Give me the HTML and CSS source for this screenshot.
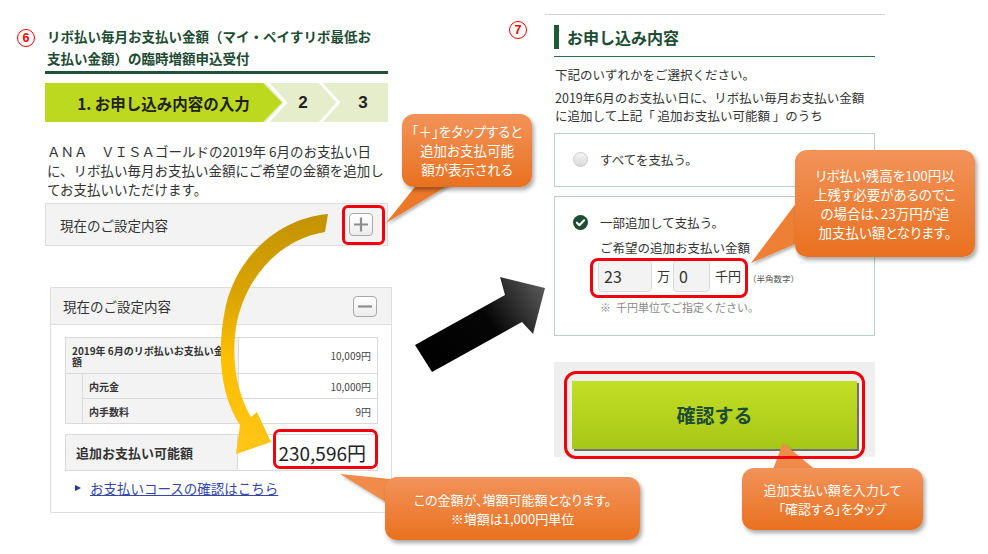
FILE: index.html
```html
<!DOCTYPE html>
<html lang="ja">
<head>
<meta charset="utf-8">
<title>リボ払い毎月お支払い金額の臨時増額申込受付</title>
<link rel="stylesheet" href="styles.css">
</head>
<body>
<div class="page">
  <section class="left">
    <h1 class="title">リボ払い毎月お支払い金額（マイ・ペイすリボ最低お<br>支払い金額）の臨時増額申込受付</h1>
    <div class="steps">
      <svg class="steps-bg" width="343" height="39" viewBox="0 0 343 39">
        <rect width="343" height="39" fill="#e5edcb"/>
        <polygon points="0,0 218,0 237,19.5 218,39 0,39" fill="#bdd91f"/>
        <polyline points="221,-2 240.5,19.5 221,41" fill="none" stroke="#fff" stroke-width="3"/>
        <polyline points="274,-2 293.5,19.5 274,41" fill="none" stroke="#fff" stroke-width="3"/>
      </svg>
      <div class="step step1">1. お申し込み内容の入力</div>
      <div class="step step2">2</div>
      <div class="step step3">3</div>
    </div>
    <p class="lead">ＡＮＡ　ＶＩＳＡゴールドの2019年 6月のお支払い日<br>に、リボ払い毎月お支払い金額にご希望の金額を追加し<br>てお支払いいただけます。</p>
    <div class="acc-row">
      <span>現在のご設定内容</span>
      <svg class="tgl" width="24" height="23" viewBox="0 0 24 23">
        <defs><linearGradient id="tg1" x1="0" y1="0" x2="0" y2="1"><stop offset="0" stop-color="#ffffff"/><stop offset="1" stop-color="#ececec"/></linearGradient></defs>
        <rect x="0.5" y="0.5" width="23" height="22" rx="3.5" fill="url(#tg1)" stroke="#a9a9a9"/>
        <path d="M12 4.5v14M5 11.5h14" stroke="#8d8d8d" stroke-width="2.2" fill="none"/>
      </svg>
    </div>
    <div class="panel">
      <div class="panel-head">
        <span>現在のご設定内容</span>
        <svg class="tgl" width="24" height="21" viewBox="0 0 24 21">
          <defs><linearGradient id="tg2" x1="0" y1="0" x2="0" y2="1"><stop offset="0" stop-color="#ffffff"/><stop offset="1" stop-color="#ececec"/></linearGradient></defs>
          <rect x="0.5" y="0.5" width="23" height="20" rx="3.5" fill="url(#tg2)" stroke="#a9a9a9"/>
          <path d="M5 10.5h14" stroke="#8d8d8d" stroke-width="2.2" fill="none"/>
        </svg>
      </div>
      <table class="detail">
        <colgroup><col class="c-ind"><col class="c-lab"><col class="c-val"></colgroup>
        <tr class="r1"><th colspan="2">2019年 6月のリボ払いお支払い金額</th><td>10,009円</td></tr>
        <tr class="r2"><th class="ind" rowspan="2"></th><th>内元金</th><td>10,000円</td></tr>
        <tr class="r2"><th>内手数料</th><td>9円</td></tr>
      </table>
      <table class="total">
        <colgroup><col class="t-lab"><col class="t-val"></colgroup>
        <tr><th>追加お支払い可能額</th><td>230,596円</td></tr>
      </table>
      <a class="link" href="#">お支払いコースの確認はこちら</a>
    </div>
  </section>

  <section class="right">
    <div class="r-head"><h2 class="r-title">お申し込み内容</h2></div>
    <p class="r-note">下記のいずれかをご選択ください。</p>
    <p class="r-desc">2019年6月のお支払い日に、リボ払い毎月お支払い金額<br>に追加して上記「 追加お支払い可能額 」のうち</p>
    <div class="opt opt1"><span class="radio"></span><span>すべてを支払う。</span></div>
    <div class="opt opt2">
      <div class="opt-line">
        <svg class="check" width="15" height="15" viewBox="0 0 15 15">
          <circle cx="7.5" cy="7.5" r="7.5" fill="#1f4a34"/>
          <path d="M3.9 7.7l2.5 2.5 4.7-4.9" stroke="#fff" stroke-width="2.1" fill="none" stroke-linecap="round" stroke-linejoin="round"/>
        </svg>
        <span>一部追加して支払う。</span>
      </div>
      <div class="sub">
        <div class="sub-label">ご希望の追加お支払い金額</div>
        <div class="amount">
          <span class="inp w1">23</span><span class="unit">万</span><span class="inp w2">0</span><span class="unit">千円</span><span class="hint">（半角数字）</span>
        </div>
        <div class="sub-note">※&nbsp; 千円単位でご指定ください。</div>
      </div>
    </div>
    <div class="btn-area"><button class="confirm" type="button">確認する</button></div>
  </section>
</div>

<svg class="overlay" width="988" height="554" viewBox="0 0 988 554">
  <defs>
    <linearGradient id="gy" gradientUnits="userSpaceOnUse" x1="0" y1="214" x2="0" y2="454">
      <stop offset="0" stop-color="#c29200"/>
      <stop offset="0.35" stop-color="#dca600"/>
      <stop offset="0.6" stop-color="#fdbf00"/>
      <stop offset="1" stop-color="#ffc518"/>
    </linearGradient>
    <linearGradient id="gk" gradientUnits="userSpaceOnUse" x1="420" y1="365" x2="546" y2="286">
      <stop offset="0" stop-color="#000"/>
      <stop offset="0.55" stop-color="#050505"/>
      <stop offset="1" stop-color="#5c5c5c"/>
    </linearGradient>
    <filter id="sh" x="-30%" y="-30%" width="160%" height="160%">
      <feDropShadow dx="1.5" dy="2" stdDeviation="1.5" flood-color="#000" flood-opacity="0.3"/>
    </filter>
  </defs>
  <path fill="url(#gy)" d="M328,214 C280,218 238,255 226,305 C216,350 220,395 240,425 L236,454 L271,442 L257,412 L251,417 C238,395 232,365 235,335 C240,285 275,240 325,232 Z"/>
  <path fill="url(#gk)" d="M415,345 L505,295 L500,277 L545,288 L533,334 L522,322 L432,372 Z"/>
  <g filter="url(#sh)">
    <polygon points="386,223 418,183 452,183" fill="#ec782b"/>
    <polygon points="751,263 800,198 800,242" fill="#ee8035"/>
    <polygon points="340,474 400,480 392,506" fill="#f08b48"/>
    <polygon points="783,443 772,472 818,472" fill="#f08b48"/>
  </g>
</svg>

<div class="hl hl1"></div>
<div class="hl hl2"></div>
<div class="hl hl3"></div>
<div class="hl hl4"></div>

<div class="num num6">6</div>
<div class="num num7">7</div>

<div class="callout co1">「＋」をタップすると<br>追加お支払可能<br>額が表示される</div>
<div class="callout co2">リボ払い残高を100円以<br>上残す必要があるのでこ<br>の場合は、23万円が追<br>加支払い額となります。</div>
<div class="callout co3">この金額が、増額可能額となります。<br>※増額は1,000円単位</div>
<div class="callout co4">追加支払い額を入力して<br>「確認する」をタップ</div>
</body>
</html>
```

FILE: styles.css
```css
* { box-sizing: border-box; margin: 0; padding: 0; }
html, body { width: 988px; height: 554px; overflow: hidden; background: #fff; }
body {
  font-family: "Noto Sans CJK JP", "Noto Sans", sans-serif;
  color: #333;
  position: relative;
}

.page { display: flex; align-items: flex-start; padding-left: 45px; }

/* ---------- left ---------- */
.left { width: 343px; flex: none; padding-top: 25px; }
.title {
  font-size: 13.5px; font-weight: 700; line-height: 22px; color: #1e4b33;
  padding-left: 2px; padding-bottom: 2px; border-bottom: 3px solid #1f5236;
}
.steps { position: relative; margin-top: 9px; height: 39px; display: flex; }
.steps-bg { position: absolute; left: 0; top: 0; }
.step {
  position: relative; height: 39px; display: flex; align-items: center; justify-content: center;
  font-weight: 700; color: #222;
}
.step1 { width: 237px; font-size: 15.5px; }
.step2 { width: 42px; font-size: 17px; font-family: "Liberation Sans", sans-serif; }
.step3 { flex: 1; padding-left: 14px; font-size: 17px; font-family: "Liberation Sans", sans-serif; }

.lead { margin-top: 19.5px; padding-left: 2px; font-size: 13.5px; line-height: 19px; color: #333; }

.acc-row {
  margin-top: 4.5px; height: 43px; background: #f3f3f3; border: 1px solid #dcdcdc;
  display: flex; align-items: center; justify-content: space-between;
  padding: 0 14px; font-size: 13.5px;
}
.tgl { display: block; }

.panel { margin-top: 41px; margin-left: 5px; width: 342px; border: 1px solid #dedede; padding-bottom: 15px; }
.panel-head {
  height: 37px; background: #f3f3f3; border-bottom: 1px solid #dedede;
  display: flex; align-items: center; justify-content: space-between;
  padding: 0 14px 0 12px; font-size: 13.5px;
}
.detail, .total { margin: 12px 0 0 14px; width: 312px; border-collapse: collapse; table-layout: fixed; }
.total { margin-top: 10px; }
.c-ind { width: 17px; } .c-lab { width: 156px; } .c-val { width: 139px; }
.t-lab { width: 172px; } .t-val { width: 140px; }
.detail th, .detail td, .total th, .total td { border: 1px solid #dadada; }
.detail th {
  background: #f3f3f3; font-size: 10px; font-weight: 700; text-align: left;
  padding: 0 6px; line-height: 11px; color: #333;
}
.detail td { background: #fff; text-align: right; font-size: 10px; padding-right: 6px; color: #444; }
.detail .r1 { height: 36px; }
.detail .r2 { height: 25px; }
.total tr { height: 36px; }
.total th { background: #f3f3f3; font-size: 13px; font-weight: 700; text-align: left; padding-left: 10px; color: #333; }
.total td { text-align: right; padding-right: 11px; font-size: 19px; color: #222; line-height: 24px; font-weight: 400; }

.link {
  position: relative; display: block; margin: 8px 0 0 24px; padding-left: 15px;
  font-size: 13.5px; line-height: 18px; color: #3447a6; text-decoration: underline;
  width: max-content;
}
.link::before {
  content: ""; position: absolute; left: 0; top: 6px;
  border-left: 6px solid #24349a; border-top: 3.5px solid transparent; border-bottom: 3.5px solid transparent;
}

/* ---------- right ---------- */
.right {
  flex: none; width: 340px; margin-left: 157px; margin-top: 14px;
  border-top: 1px solid #d2d2d2; padding: 10px 10px 0 9px;
}
.r-head { padding-bottom: 7px; border-bottom: 1.5px solid #2d6b4b; }
.r-title {
  border-left: 5px solid #1e5a38; padding-left: 8px;
  font-size: 16px; font-weight: 700; line-height: 24px; color: #1e4b33;
}
.r-note { margin-top: 8.5px; padding-left: 1px; font-size: 12.5px; line-height: 18px; }
.r-desc { margin-top: 5.5px; padding-left: 1px; font-size: 12.5px; line-height: 18px; }

.opt { border: 1px solid #b9d1c8; font-size: 12.5px; }
.opt1 { margin-top: 7.5px; height: 54px; display: flex; align-items: center; padding-left: 18px; }
.radio {
  width: 15px; height: 15px; border-radius: 50%; border: 1px solid #cbcbcb;
  background: linear-gradient(#f4f4f4, #dadada); margin-right: 12px; flex: none;
}
.opt2 { margin-top: 9px; padding: 17px 0 20px 18px; }
.opt-line { display: flex; align-items: center; line-height: 18px; }
.check { display: block; margin-right: 12px; flex: none; }
.sub { padding-left: 27px; }
.sub-label { margin-top: 7px; line-height: 18px; }
.amount { margin-top: 3px; display: flex; align-items: center; height: 32px; }
.inp {
  height: 32px; display: flex; align-items: center; padding-left: 5px;
  background: #f3f3f3; border: 1px solid #d9d9d9; border-radius: 4px;
  font-size: 16px; color: #333;
}
.w1 { width: 54px; margin-left: -2px; }
.w2 { width: 37px; }
.unit { font-size: 13px; margin: 0 3px 0 5px; }
.hint { font-size: 8.5px; margin-left: 4px; margin-top: 4px; color: #555; }
.sub-note { margin-top: 7px; font-size: 11px; line-height: 16px; color: #888; }

.btn-area { margin-top: 26px; height: 95px; background: #efefef; padding: 19px 18px 0; }
.confirm {
  display: block; width: 285px; height: 68px; border: none;
  background: linear-gradient(#c3de26, #a7c716);
  box-shadow: 2px 2px 0 #707070;
  font-family: inherit; font-size: 19px; font-weight: 700; color: #1e4b33;
}

/* ---------- annotations ---------- */
.overlay { position: absolute; left: 0; top: 0; pointer-events: none; }

.hl { position: absolute; border: 3px solid #f2000c; }
.hl1 { left: 342px; top: 205px; width: 43px; height: 40px; border-radius: 6px; }
.hl2 { left: 273px; top: 429px; width: 105px; height: 40px; border-radius: 7px; }
.hl3 { left: 590px; top: 258px; width: 158px; height: 40px; border-radius: 8px; }
.hl4 { left: 564px; top: 371px; width: 301px; height: 88px; border-radius: 12px; }

.num {
  position: absolute; width: 18px; height: 18px; border-radius: 50%;
  border: 1.6px solid #f00; color: #f00;
  font-family: "Liberation Sans", sans-serif; font-weight: 700; font-size: 12.5px;
  display: flex; align-items: center; justify-content: center; line-height: 1;
}
.num6 { left: 17px; top: 29px; }
.num7 { left: 509px; top: 21px; }

.callout {
  position: absolute; display: flex; align-items: center; justify-content: center;
  text-align: center; color: #fff; font-size: 13px; line-height: 19px;
  font-feature-settings: "palt";
  background: linear-gradient(#f2935a, #e9711f);
  border-radius: 12px; box-shadow: 2px 3px 4px rgba(0, 0, 0, 0.35);
}
.co1 { left: 402px; top: 114px; width: 130px; height: 73px; font-size: 13.5px; }
.co2 { left: 795px; top: 150px; width: 180px; height: 107px; font-size: 13.5px; }
.co3 { left: 385px; top: 477px; width: 255px; height: 63px; }
.co4 { left: 742px; top: 468px; width: 181px; height: 62px; }
```
